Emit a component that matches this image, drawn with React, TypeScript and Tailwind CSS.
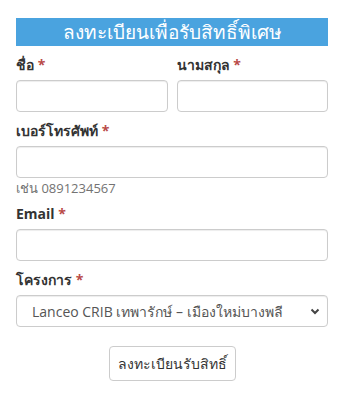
export default function App() {
  const inputCls = 'block w-full h-[32px] rounded-[4px] border border-[#cccccc] bg-white shadow-[inset_0_1px_1px_rgba(0,0,0,0.075)]';
  const labelCls = 'block text-[14px] leading-[20px] font-bold text-[#333333] mb-[5px]';
  const star = <span className="text-[#b94a48]"> *</span>;

  return (
    <div className="w-[346px] h-[407px] bg-white font-['Open_Sans','Noto_Sans',sans-serif] text-[#333333]">
      <div className="pl-[16px] pr-[18px] pt-[18px]">
        <div className="h-[28px] bg-[#4aa3df] text-white text-[19px] leading-[28px] text-center">
          ลงทะเบียนเพื่อรับสิทธิ์พิเศษ
        </div>

        <div className="mt-[9px] flex gap-[9px]">
          <div className="flex-1">
            <label className={labelCls}>ชื่อ{star}</label>
            <div className={inputCls} />
          </div>
          <div className="flex-1">
            <label className={labelCls}>นามสกุล{star}</label>
            <div className={inputCls} />
          </div>
        </div>

        <div className="mt-[9px]">
          <label className={labelCls}>เบอร์โทรศัพท์{star}</label>
          <div className={inputCls} />
          <div className="mt-[1px] text-[13px] leading-[18px] text-[#737373]">เช่น 0891234567</div>
        </div>

        <div className="mt-[7px]">
          <label className={labelCls}>Email{star}</label>
          <div className={inputCls} />
        </div>

        <div className="mt-[9px]">
          <label className={labelCls}>โครงการ{star}</label>
          <div className={`${inputCls} flex items-center justify-between pl-[15px] pr-[7px] text-[14px] text-[#555555]`}>
            <span>Lanceo CRIB เทพารักษ์ – เมืองใหม่บางพลี</span>
            <svg width="10" height="10" viewBox="0 0 10 10" fill="none" stroke="#444" strokeWidth="2">
              <path d="M1.5 3.5 L5 7 L8.5 3.5" />
            </svg>
          </div>
        </div>

        <div className="mt-[19px] flex justify-center">
          <button className="h-[35px] w-[127px] rounded-[4px] border border-[#cccccc] bg-white text-[14px] text-[#333333]">
            ลงทะเบียนรับสิทธิ์
          </button>
        </div>
      </div>
    </div>
  );
}
